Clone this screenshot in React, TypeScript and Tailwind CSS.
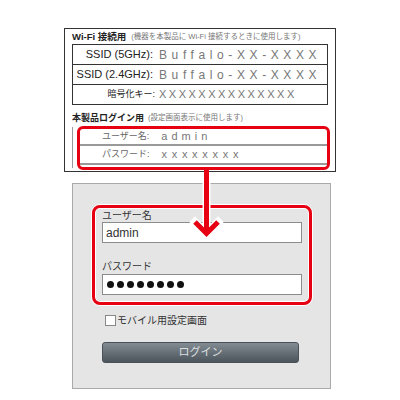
export default function App() {
  const dots = [0, 1, 2, 3, 4, 5, 6, 7];
  return (
    <div className="relative w-[400px] h-[400px] bg-white overflow-hidden font-['Liberation_Sans','Noto_Sans_CJK_JP',sans-serif] text-[#222]">
      <div className="pt-[28px] pl-[64px]">
        {/* top card */}
        <div className="w-[272px] h-[144px] border border-[#333] pl-[7px]">
          <div className="h-[15px] flex items-center whitespace-nowrap">
            <span className="text-[9.5px] font-bold leading-none">Wi-Fi 接続用</span>
            <span className="ml-[5px] text-[7.5px] text-[#777] leading-none">(機器を本製品に Wi-Fi 接続するときに使用します)</span>
          </div>
          <div className="w-[256px] border-t border-x border-[#333]">
            <div className="h-[20px] border-b border-[#333] flex items-center whitespace-nowrap">
              <span className="w-[80px] text-right text-[11px] leading-none">SSID (5GHz):</span>
              <span className="ml-[6px] text-[12px] leading-none text-[#777] tracking-[4.6px]">Buffalo-XX-XXXX</span>
            </div>
            <div className="h-[20px] border-b border-[#333] flex items-center whitespace-nowrap">
              <span className="w-[80px] text-right text-[11px] leading-none">SSID (2.4GHz):</span>
              <span className="ml-[6px] text-[12px] leading-none text-[#777] tracking-[4.6px]">Buffalo-XX-XXXX</span>
            </div>
            <div className="h-[20px] border-b border-[#333] flex items-center whitespace-nowrap">
              <span className="w-[82px] text-right text-[9px] leading-none">暗号化キー:</span>
              <span className="ml-[4px] text-[11px] leading-none text-[#777] tracking-[2.5px]">XXXXXXXXXXXXXX</span>
            </div>
          </div>
          <div className="mt-[5px] h-[16px] flex items-center whitespace-nowrap">
            <span className="text-[9px] font-bold leading-none">本製品ログイン用</span>
            <span className="ml-[4px] text-[7.5px] text-[#777] leading-none">(設定画面表示に使用します)</span>
          </div>
          <div className="flex">
            <div className="w-[1px] h-[41px] mt-[1px] bg-[#999]" />
            <div className="ml-[4px] w-[253px] h-[44px] border-[3px] border-[#e60012] rounded-[6px]">
              <div className="h-[17px] border-b-2 border-[#999] flex items-center pl-[22px] whitespace-nowrap">
                <span className="text-[9px] leading-none text-[#666]">ユーザー名:</span>
                <span className="ml-[12px] text-[11px] leading-none text-[#777] tracking-[4px]">admin</span>
              </div>
              <div className="h-[19px] border-b-2 border-[#999] flex items-center pl-[22px] whitespace-nowrap">
                <span className="text-[9px] leading-none text-[#666]">パスワード:</span>
                <span className="ml-[12px] text-[11px] leading-none text-[#777] tracking-[4.7px]">xxxxxxxx</span>
              </div>
            </div>
          </div>
        </div>

        {/* bottom panel */}
        <div className="mt-[11px] ml-[8px] w-[259px] h-[206px] border border-[#a9a9a9] bg-[#e5e5e5] pl-[19px] pt-[21px]">
          <div className="w-[220px] h-[100px] border-[3px] border-[#e60012] rounded-[8px] shadow-[0_0_0_1px_#fff,inset_0_0_0_1px_#fff] pl-[7px]">
            <div className="h-[14px] flex items-end text-[10px] leading-[12px] text-[#333]">ユーザー名</div>
            <div className="w-[200px] h-[21px] bg-white border border-[#8c8c8c] flex items-center pl-[3px] text-[12px] text-[#333] leading-none">admin</div>
            <div className="mt-[17px] h-[14px] flex items-center text-[10px] leading-none text-[#333]">パスワード</div>
            <div className="w-[200px] h-[21px] bg-white border border-[#8c8c8c] flex items-center pl-[4px] gap-[3px]">
              {dots.map((d) => (
                <span key={d} className="w-[7px] h-[7px] rounded-full bg-[#111]" />
              ))}
            </div>
          </div>
          <div className="mt-[10px] ml-[13px] flex items-center h-[11px]">
            <span className="w-[11px] h-[11px] bg-white border border-[#888]" />
            <span className="ml-[1px] text-[10px] leading-none text-[#333] whitespace-nowrap">モバイル用設定画面</span>
          </div>
          <div className="mt-[16px] ml-[10px] w-[197px] h-[21px] rounded-[3px] border border-[#4a5058] bg-gradient-to-b from-[#838b93] to-[#4c545c] flex items-center justify-center text-[11px] leading-none text-[#dde0e3]">
            ログイン
          </div>
        </div>
      </div>

      {/* arrow */}
      <svg className="absolute left-[188px] top-[166px]" width="38" height="76" viewBox="0 0 38 76">
        <path d="M18.5 7 V66" stroke="#fff" strokeWidth="8" fill="none" />
        <path d="M7 56 L18.5 67.5 L30 56" stroke="#fff" strokeWidth="8" fill="none" strokeLinecap="square" />
        <path d="M18.5 3 V66" stroke="#e60012" strokeWidth="5" fill="none" />
        <path d="M7 56 L18.5 67.5 L30 56" stroke="#e60012" strokeWidth="5" fill="none" />
      </svg>
    </div>
  );
}
